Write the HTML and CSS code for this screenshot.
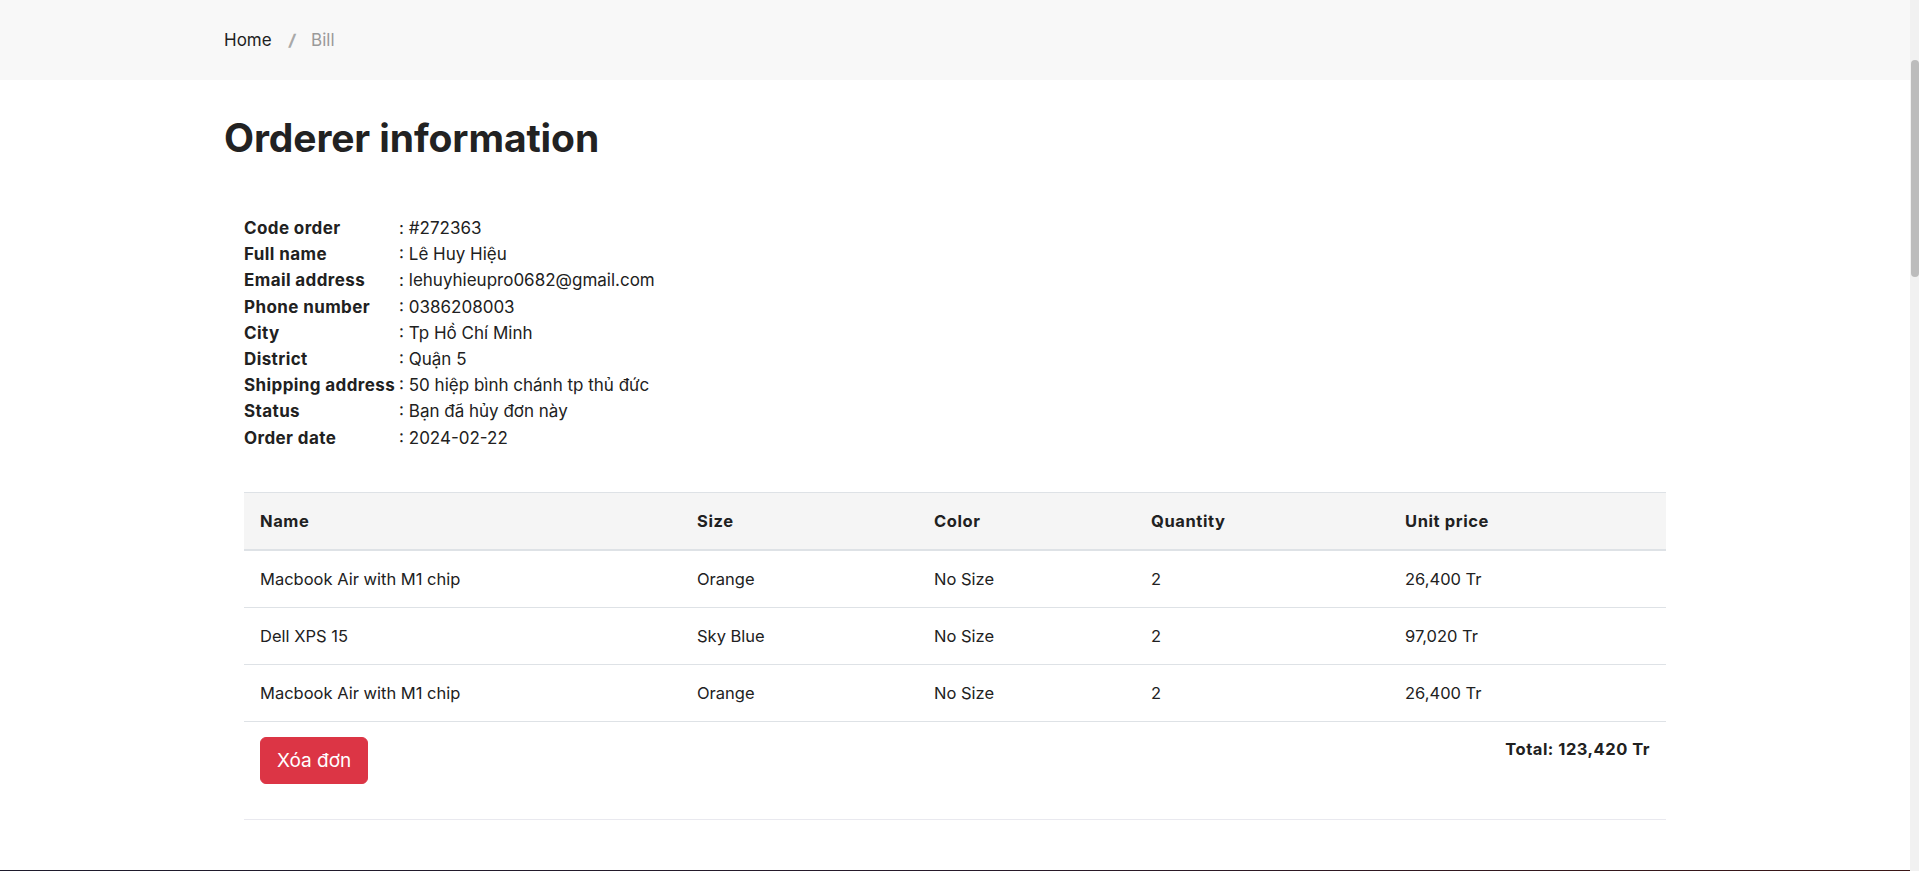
FILE: index.html
```html
<!DOCTYPE html>
<html lang="vi">
<head>
<meta charset="utf-8">
<title>Bill</title>
<link rel="stylesheet" href="styles.css">
</head>
<body>
<nav class="breadcrumb-bar">
  <div class="container">
    <a class="crumb" href="#">Home</a>
    <span class="crumb-sep">/</span>
    <span class="crumb-current">Bill</span>
  </div>
</nav>
<main class="container main">
  <h1 class="title">Orderer information</h1>
  <div class="inner">
    <table class="info">
      <tr><th>Code order</th><td>: #272363</td></tr>
      <tr><th>Full name</th><td>: Lê Huy Hiệu</td></tr>
      <tr><th>Email address</th><td>: lehuyhieupro0682@gmail.com</td></tr>
      <tr><th>Phone number</th><td>: 0386208003</td></tr>
      <tr><th>City</th><td>: Tp Hồ Chí Minh</td></tr>
      <tr><th>District</th><td>: Quận 5</td></tr>
      <tr><th>Shipping address</th><td>: 50 hiệp bình chánh tp thủ đức</td></tr>
      <tr><th>Status</th><td>: Bạn đã hủy đơn này</td></tr>
      <tr><th>Order date</th><td>: 2024-02-22</td></tr>
    </table>

    <table class="items">
      <colgroup>
        <col class="c-name"><col class="c-size"><col class="c-color"><col class="c-qty"><col class="c-price">
      </colgroup>
      <thead>
        <tr><th>Name</th><th>Size</th><th>Color</th><th>Quantity</th><th>Unit price</th></tr>
      </thead>
      <tbody>
        <tr><td>Macbook Air with M1 chip</td><td>Orange</td><td>No Size</td><td>2</td><td>26,400 Tr</td></tr>
        <tr><td>Dell XPS 15</td><td>Sky Blue</td><td>No Size</td><td>2</td><td>97,020 Tr</td></tr>
        <tr><td>Macbook Air with M1 chip</td><td>Orange</td><td>No Size</td><td>2</td><td>26,400 Tr</td></tr>
      </tbody>
      <tfoot>
        <tr>
          <td colspan="2" class="actions"><button class="btn-danger" type="button">Xóa đơn</button></td>
          <td colspan="3" class="total">Total: 123,420 Tr</td>
        </tr>
      </tfoot>
    </table>
  </div>
</main>
<footer class="site-footer"></footer>
<div class="scrollbar" aria-hidden="true"><div class="scrollbar-thumb"></div></div>
</body>
</html>
```
FILE: styles.css
```css
* { box-sizing: border-box; }
body {
  margin: 0;
  padding-right: 9px;
  font-family: Inter, "Noto Sans", sans-serif;
  font-size: 16px;
  color: #212121;
  background: #fff;
}
.container { width: 1462px; margin: 0 auto; }

.breadcrumb-bar { background: #f8f8f8; height: 80px; display: flex; align-items: center; }
.breadcrumb-bar .container { display: flex; align-items: center; font-size: 17px; }
.crumb { color: #1e1e1e; text-decoration: none; }
.crumb-sep { color: #a9a9a9; font-weight: 800; margin: 0 16px 0 17px; font-size: 16px; transform: skewX(-8deg); display: inline-block; }
.crumb-current { color: #9a9a9a; }

.main { padding-top: 36px; padding-bottom: 50px; }
.title { margin: 0; font-size: 39px; font-weight: 700; line-height: 44px; color: #222; letter-spacing: -0.1px; }
.inner { padding: 55px 20px 0; }

.info { border-collapse: collapse; margin-bottom: 41px; }
.info th { text-align: left; font-weight: 700; padding: 0 4px 0 0; line-height: 26.2px; font-size: 17px; letter-spacing: 0.4px; }
.info td { padding: 0; line-height: 26.2px; font-size: 17px; }

.items { width: 100%; border-collapse: collapse; table-layout: fixed; }
.c-name { width: 437px; }
.c-size { width: 237px; }
.c-color { width: 217px; }
.c-qty { width: 254px; }
.items th, .items td { text-align: left; padding: 0 16px; font-size: 16.5px; }
.items thead th { background: #f5f5f5; height: 58px; font-weight: 700; letter-spacing: 0.6px; border-top: 1px solid #dee2e6; border-bottom: 2px solid #dee2e6; }
.items tbody td { height: 57px; border-bottom: 1px solid #dee2e6; }
.items tfoot td { vertical-align: top; border-bottom: 1px solid #e9e9ef; }
.actions { padding: 15px 16px 35px !important; }
.total { text-align: right !important; font-weight: 700; letter-spacing: 0.5px; padding-top: 17px !important; }

.btn-danger {
  font-family: Inter, "Noto Sans", sans-serif;
  font-size: 19px;
  color: #fff;
  background: #dc3545;
  border: 1px solid #dc3545;
  border-radius: 6px;
  padding: 0 16px;
  height: 47px;
}

.site-footer { height: 300px; background: linear-gradient(90deg, #1d1a2c 0%, #26192a 50%, #3a1616 100%); }

.scrollbar { position: fixed; top: 0; right: 0; width: 9px; height: 100vh; background: #f1f1f1; }
.scrollbar-thumb { margin-top: 60px; height: 217px; width: 8px; margin-left: 1px; background: #bcbcbc; border-radius: 5px; }
```
